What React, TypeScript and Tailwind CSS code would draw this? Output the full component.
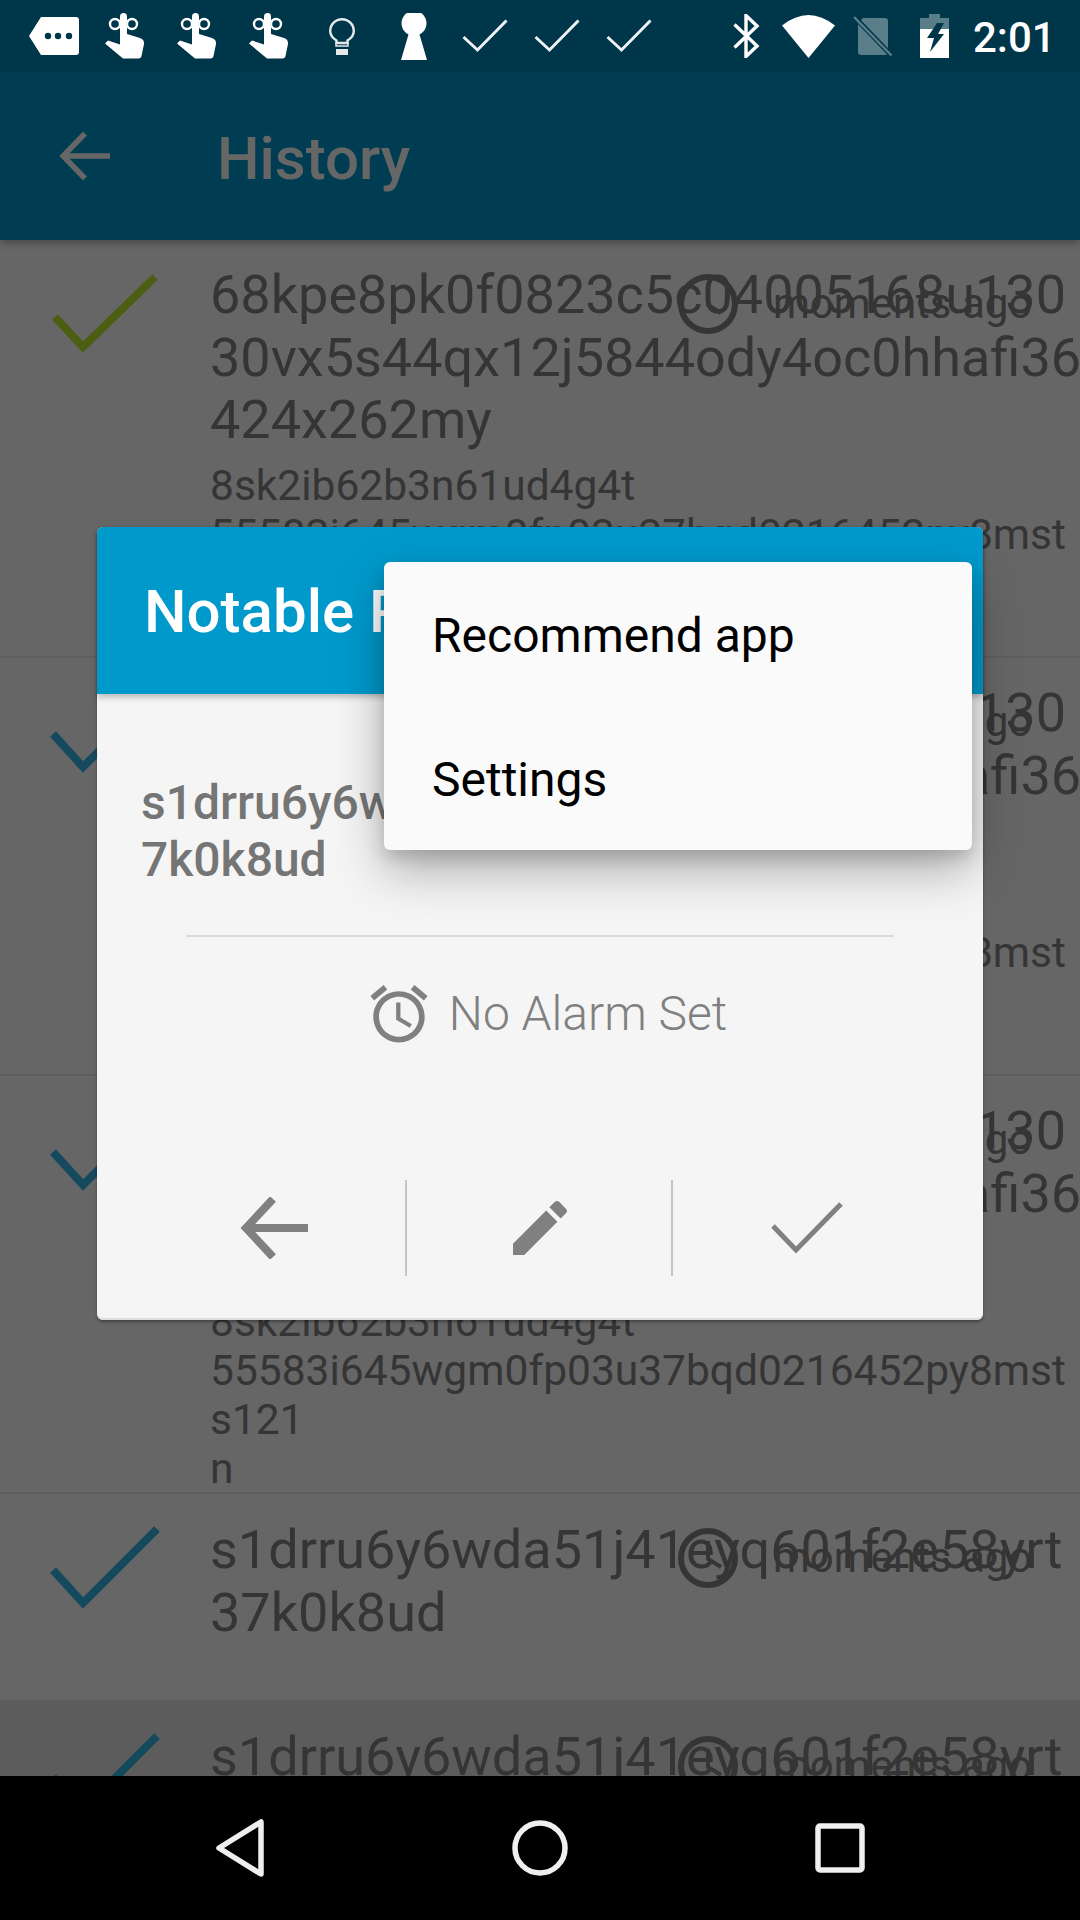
const FONT = "font-['Roboto','Noto_Sans',sans-serif]";

const longTitle = ["68kpe8pk0f0823c5c04005168u130", "30vx5s44qx12j5844ody4oc0hhafi36", "424x262my"];
const longSub = ["8sk2ib62b3n61ud4g4t", "55583i645wgm0fp03u37bqd0216452py8mst", "s121", "n"];
const shortTitle = ["s1drru6y6wda51j41eyq601f2e58yrt", "37k0k8ud"];

const smallTick = "M3 43L31 73L103 3";
const bigTick = "M1 42L31 75L105 1";

const rows = [
  { title: longTitle, sub: longSub, check: "#bdea2c", tick: smallTick, cls: "h-[418px] pt-[24px]", checkCls: "mt-[10px]" },
  { title: longTitle, sub: longSub, check: "#35b6e8", tick: bigTick, cls: "h-[418px] pt-[24px]", checkCls: "mt-[10px]" },
  { title: longTitle, sub: longSub, check: "#35b6e8", tick: bigTick, cls: "h-[418px] pt-[24px]", checkCls: "mt-[10px]" },
  { title: shortTitle, sub: [], check: "#35b6e8", tick: bigTick, cls: "h-[208px] pt-[25px]", checkCls: "mt-[9px]" },
  { title: shortTitle, sub: [], check: "#35b6e8", tick: bigTick, cls: "h-[208px] pt-[24px] bg-[#e6e6e6]", checkCls: "mt-[9px]" },
];

function HandIcon() {
  return (
    <svg width="40" height="46" viewBox="0 0 40 46" className="shrink-0">
      <circle cx="10" cy="11" r="5" fill="none" stroke="white" strokeWidth="2.4" />
      <circle cx="27" cy="11" r="5" fill="none" stroke="white" strokeWidth="2.4" />
      <path d="M15 3.5a3.5 3.5 0 0 1 7 0V21L35 25Q39.500 26.500 39 31L36.500 43Q36 45.500 33 45.500H18L0 30.500L3 27.500L15 31.500Z" fill="white" />
    </svg>
  );
}

function SmallCheck() {
  return (
    <svg width="46" height="34" viewBox="0 0 46 34" className="shrink-0">
      <path d="M1.500 18L15.500 31L44.500 1.500" fill="none" stroke="#eef2f3" strokeWidth="3" />
    </svg>
  );
}

function StatusBar() {
  return (
    <div className="relative z-20 h-[72px] shrink-0 flex items-center bg-[#003649] text-white">
      <svg width="50" height="38" viewBox="0 0 50 38" className="ml-[29px] shrink-0">
        <path d="M12 0H47Q50 0 50 3V35Q50 38 47 38H12L0 19Z" fill="white" />
        <circle cx="19" cy="19" r="3.200" fill="#003649" />
        <circle cx="29" cy="19" r="3.200" fill="#003649" />
        <circle cx="40" cy="19" r="3.200" fill="#003649" />
      </svg>
      <div className="ml-[26px]"><HandIcon /></div>
      <div className="ml-[32px]"><HandIcon /></div>
      <div className="ml-[32px]"><HandIcon /></div>
      <svg width="26" height="37" viewBox="0 0 26 37" className="ml-[40px] shrink-0">
        <path d="M7.500 25V22.500C3.500 20 1.200 17 1.200 13A11.800 11.800 0 0 1 24.800 13C24.800 17 22.500 20 18.500 22.500V25Z" fill="none" stroke="#e4e9eb" strokeWidth="2.400" />
        <rect x="7" y="25" width="12" height="3" fill="none" stroke="#e4e9eb" strokeWidth="1.500" />
        <rect x="7" y="31" width="12" height="6" fill="#e4e9eb" />
      </svg>
      <svg width="26" height="47" viewBox="0 0 26 47" className="ml-[46px] shrink-0">
        <path d="M7.500 21.500A12.500 12.500 0 1 1 18.500 21.500L26 47H0Z" fill="white" />
      </svg>
      <div className="ml-[35px]"><SmallCheck /></div>
      <div className="ml-[26px]"><SmallCheck /></div>
      <div className="ml-[26px]"><SmallCheck /></div>
      <svg width="27" height="44" viewBox="0 0 27 44" className="ml-[81px] shrink-0">
        <path d="M1.500 10.500L24 32L13 42.500V1.500L24 12L1.500 33.500" fill="none" stroke="white" strokeWidth="3.400" />
      </svg>
      <svg width="53" height="43" viewBox="0 0 53 43" className="ml-[22px] shrink-0">
        <path d="M0 10.500Q26.500 -10.500 53 10.500L26.500 43Z" fill="white" />
      </svg>
      <svg width="40" height="41" viewBox="0 0 40 41" className="ml-[18px] shrink-0">
        <path d="M10 2H32Q35 2 35 5V36Q35 39 32 39H8Q5 39 5 36V7Z" fill="#5a7d8a" />
        <path d="M1 0.500L39 40" stroke="#003649" strokeWidth="5" />
        <path d="M1 1L38.500 39.500" stroke="#5a7d8a" strokeWidth="2.500" />
      </svg>
      <svg width="29" height="44" viewBox="0 0 29 44" className="ml-[27px] shrink-0">
        <path d="M9 0H20V4H29V44H0V4H9Z" fill="#5a7d8a" />
        <path d="M0 15H29V44H0Z" fill="white" />
        <path d="M17 9H24L18 20H24L10 38L14 24H7Z" fill="#003649" />
      </svg>
      <span className="ml-[24px] mt-[3px] text-[42px] font-medium leading-none">2:01</span>
    </div>
  );
}

function Toolbar() {
  return (
    <div className="relative z-[1] h-[168px] shrink-0 flex items-center bg-[#0099cc] text-white shadow-[0_3px_8px_rgba(0,0,0,0.3)]">
      <svg width="50" height="48" viewBox="0 0 50 48" className="ml-[60px] shrink-0">
        <path d="M50 24H3M25 1.500L3 24L25 46.500" fill="none" stroke="white" strokeWidth="5.500" />
      </svg>
      <span className="ml-[107px] mt-[5px] text-[60px] font-medium">History</span>
    </div>
  );
}

function ClockIcon() {
  return (
    <svg width="62" height="62" viewBox="0 0 62 62">
      <circle cx="31" cy="31" r="27" fill="none" stroke="#858585" strokeWidth="6" />
      <path d="M31 14V32L44 40" fill="none" stroke="#858585" strokeWidth="4" />
    </svg>
  );
}

function Row({ title, sub, check, tick, cls, checkCls }: (typeof rows)[number]) {
  return (
    <div className={`relative flex shrink-0 border-b-2 border-[#ebebeb] pl-[52px] text-[#858585] ${cls}`}>
      <svg width="106" height="76" viewBox="0 0 106 76" className={`shrink-0 overflow-visible ${checkCls}`}>
        <path d={tick} fill="none" stroke={check} strokeWidth="8" />
      </svg>
      <div className="ml-[52px] whitespace-nowrap">
        <div className="text-[54px] leading-[62.5px]">
          {title.map((l, i) => <div key={i}>{l}</div>)}
        </div>
        <div className="mt-[9px] text-[42.5px] leading-[49px]">
          {sub.map((l, i) => <div key={i}>{l}</div>)}
        </div>
      </div>
      <div className="absolute left-[677px] top-[33px]"><ClockIcon /></div>
      <span className="absolute left-[773px] top-[42px] text-[42px] leading-[44px] whitespace-nowrap">moments ago</span>
    </div>
  );
}

function Dialog() {
  return (
    <div className="absolute left-[97px] top-[455px] w-[886px] h-[793px] rounded-[6px] bg-[#f5f5f5] shadow-[inset_0_-2px_0_#dcdcdc,0_2px_3px_rgba(0,0,0,0.35)] z-10">
      <div className="h-[167px] rounded-t-[6px] bg-[#0099cc] flex items-center pl-[47px] pt-[3px] shadow-[0_3px_6px_rgba(0,0,0,0.25)]">
        <span className="text-[60px] font-medium text-white">Notable Post</span>
      </div>
      <div className="px-[44px] pt-[80px] h-[241px]">
        <div className="text-[48px] leading-[57px] font-medium text-[#757575]">
          <div className="whitespace-nowrap">s1drru6y6wda51j41eyq601f2e58yrt</div>
          <div>7k0k8ud</div>
        </div>
      </div>
      <div className="mx-[89px] h-[2px] bg-[#d9d9d9]" />
      <div className="flex items-center justify-center mt-[47px] pl-[16px] text-[#808080]">
        <svg width="60" height="60" viewBox="1.500 1.500 21 21" className="shrink-0 mr-[20px]" fill="#808080">
          <path d="M22 5.720l-4.600-3.860-1.290 1.530 4.600 3.860L22 5.720zM7.880 3.390L6.600 1.860 2 5.710l1.290 1.530 4.590-3.850zM12.500 8H11v6l4.750 2.850.75-1.230-4-2.370V8zM12 4c-4.970 0-9 4.030-9 9s4.030 9 9 9c4.970 0 9-4.030 9-9s-4.030-9-9-9zm0 16c-3.870 0-7-3.130-7-7s3.130-7 7-7 7 3.130 7 7-3.130 7-7 7z" />
        </svg>
        <span className="text-[48px] font-light leading-[60px]">No Alarm Set</span>
      </div>
      <div className="flex items-center mt-[136px] pl-[80px]">
        <div className="w-[230px] h-[96px] pr-[34px] flex items-center justify-center border-r-2 border-[#c4c4c4]">
          <svg width="68" height="62" viewBox="0 0 68 62" className="shrink-0">
            <path d="M68 31H6M33 2L6 31L33 60" fill="none" stroke="#808080" strokeWidth="8" />
          </svg>
        </div>
        <div className="w-[266px] h-[96px] pl-[2px] flex items-center justify-center border-r-2 border-[#c4c4c4]">
          <svg width="72" height="72" viewBox="0 0 24 24" fill="#808080">
            <path d="M3 17.250V21h3.750L17.810 9.940l-3.750-3.750L3 17.250zM20.710 7.040c.39-.39.39-1.020 0-1.410l-2.340-2.340c-.39-.39-1.020-.39-1.410 0l-1.830 1.830 3.750 3.750 1.830-1.830z" />
          </svg>
        </div>
        <div className="w-[268px] h-[96px] flex items-center justify-center">
          <svg width="72" height="52" viewBox="0 0 72 52">
            <path d="M2 24L25 48L70 2" fill="none" stroke="#808080" strokeWidth="5" />
          </svg>
        </div>
      </div>
      <div className="absolute left-[287px] top-[35px] w-[588px] rounded-[6px] bg-[#fafafa] text-[48px] text-black shadow-[0_8px_16px_rgba(0,0,0,0.14),0_20px_50px_rgba(0,0,0,0.3)]">
        <div className="h-[144px] pl-[48px] pt-[4px] flex items-center">Recommend app</div>
        <div className="h-[144px] pl-[48px] pt-[4px] flex items-center">Settings</div>
      </div>
    </div>
  );
}

function NavBar() {
  return (
    <div className="relative z-20 h-[144px] shrink-0 bg-black flex items-center">
      <svg width="48" height="58" viewBox="0 0 48 58" className="ml-[216px] shrink-0">
        <path d="M45 3V55L3 29Z" fill="none" stroke="#efefef" strokeWidth="5.500" strokeLinejoin="round" />
      </svg>
      <svg width="56" height="56" viewBox="0 0 56 56" className="ml-[248px] shrink-0">
        <circle cx="28" cy="28" r="25" fill="none" stroke="#efefef" strokeWidth="5.500" />
      </svg>
      <svg width="50" height="50" viewBox="0 0 50 50" className="ml-[247px] shrink-0">
        <rect x="3" y="3" width="44" height="44" rx="2" fill="none" stroke="#efefef" strokeWidth="5.500" />
      </svg>
    </div>
  );
}

export default function App() {
  return (
    <div className={`${FONT} relative w-[1080px] h-[1920px] overflow-hidden flex flex-col bg-white`}>
      <StatusBar />
      <div className="relative flex-1 flex flex-col overflow-hidden bg-white">
        <Toolbar />
        <div className="flex flex-col">
          {rows.map((r, i) => <Row key={i} {...r} />)}
        </div>
        {/* dim behind the dialog */}
        <div className="absolute inset-0 z-[5] bg-black/60" />
        <Dialog />
      </div>
      <NavBar />
    </div>
  );
}
